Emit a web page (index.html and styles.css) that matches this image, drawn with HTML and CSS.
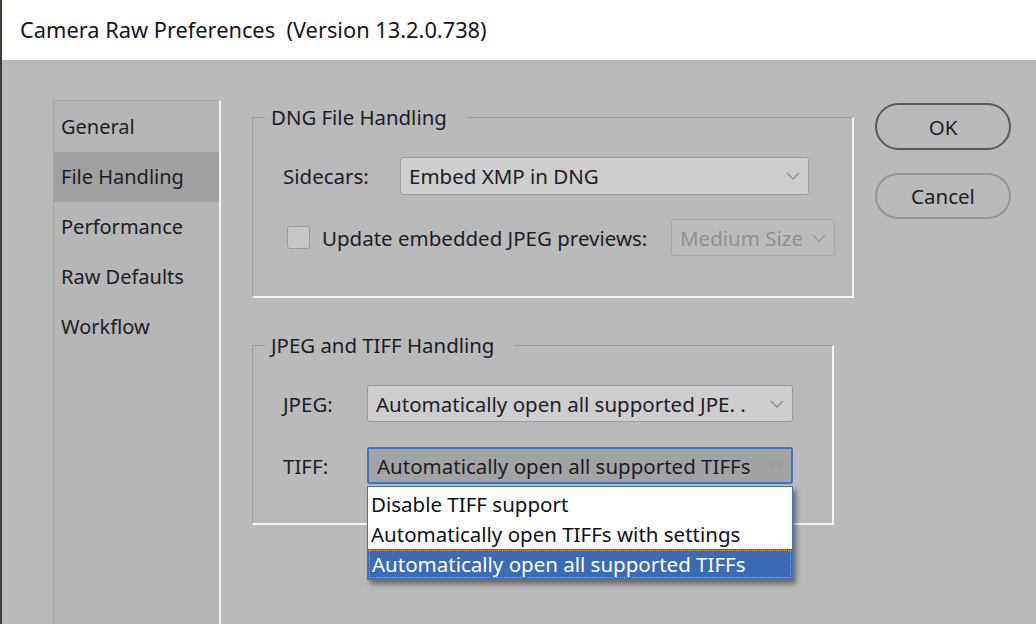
FILE: index.html
```html
<!DOCTYPE html>
<html>
<head>
<meta charset="utf-8">
<link rel="stylesheet" href="styles.css">
</head>
<body>
<div class="window">
  <div class="titlebar">Camera Raw Preferences&nbsp; (Version 13.2.0.738)</div>
  <div class="main">
    <nav class="sidebar">
      <div class="nav-item">General</div>
      <div class="nav-item selected">File Handling</div>
      <div class="nav-item">Performance</div>
      <div class="nav-item">Raw Defaults</div>
      <div class="nav-item">Workflow</div>
    </nav>
    <div class="content">
      <div class="groups">
        <fieldset class="group group-dng">
          <legend>DNG File Handling</legend>
          <div class="row">
            <span class="label label-side">Sidecars:</span>
            <div class="select sel-sidecars"><span>Embed XMP in DNG</span>
              <svg class="chev" width="14" height="8" viewBox="0 0 14 8"><polyline points="1,1 7,7 13,1" fill="none" stroke="#8c8c8c" stroke-width="1.3"/></svg>
            </div>
          </div>
          <div class="row row-check">
            <span class="checkbox"></span>
            <span class="label label-check">Update embedded JPEG previews:</span>
            <div class="select sel-disabled"><span>Medium Size</span>
              <svg class="chev" width="14" height="8" viewBox="0 0 14 8"><polyline points="1,1 7,7 13,1" fill="none" stroke="#9a9a9a" stroke-width="1.3"/></svg>
            </div>
          </div>
        </fieldset>
        <fieldset class="group group-jpeg">
          <legend>JPEG and TIFF Handling</legend>
          <div class="row">
            <span class="label label-jt">JPEG:</span>
            <div class="select sel-jt"><span>Automatically open all supported JPE. .</span>
              <svg class="chev" width="14" height="8" viewBox="0 0 14 8"><polyline points="1,1 7,7 13,1" fill="none" stroke="#8c8c8c" stroke-width="1.3"/></svg>
            </div>
          </div>
          <div class="row row-tiff">
            <span class="label label-jt">TIFF:</span>
            <div class="tiff-wrap">
              <div class="select sel-jt sel-focus"><span>Automatically open all supported TIFFs</span>
                <svg class="chev" width="14" height="8" viewBox="0 0 14 8"><polyline points="1,1 7,7 13,1" fill="none" stroke="#9a9a9a" stroke-width="1.3"/></svg>
              </div>
              <ul class="dropdown">
                <li>Disable TIFF support</li>
                <li>Automatically open TIFFs with settings</li>
                <li class="active">Automatically open all supported TIFFs</li>
              </ul>
            </div>
          </div>
        </fieldset>
      </div>
      <div class="buttons">
        <div class="btn btn-ok">OK</div>
        <div class="btn btn-cancel">Cancel</div>
      </div>
    </div>
  </div>
</div>
</body>
</html>
```
FILE: styles.css
```css
* { box-sizing: border-box; }
html, body { margin: 0; padding: 0; }
body {
  width: 1036px;
  height: 624px;
  overflow: hidden;
  font-family: "Noto Sans", "Open Sans", sans-serif;
  color: #1c1c28;
  background: #bababa;
}
.window {
  height: 624px;
  border-left: 2px solid #3e3f33;
  display: flex;
  flex-direction: column;
}
.titlebar {
  height: 60px;
  background: #ffffff;
  font-size: 21.8px;
  padding: 15px 0 0 18px;
  line-height: 30px;
  color: #15151d;
  flex: none;
}
.main {
  flex: 1;
  background: #bababa;
  display: flex;
  padding: 40px 0 0 51px;
}
.sidebar {
  width: 168px;
  background: #b6b6b6;
  border-top: 1px solid #a6a6a6;
  border-left: 1px solid #a4a4a4;
  border-right: 2px solid #f6f6f6;
  padding-top: 1px;
  flex: none;
}
.nav-item {
  height: 50px;
  line-height: 50px;
  padding-left: 7px;
  font-size: 20px;
}
.nav-item.selected { background: #a1a1a1; }
.content {
  display: flex;
  padding: 4px 0 0 31px;
  gap: 21px;
  align-items: flex-start;
}
.groups {
  display: flex;
  flex-direction: column;
  gap: 34px;
}
.group {
  margin: 0;
  border-top: 1px solid #9c9c9c;
  border-left: 1px solid #9c9c9c;
  border-right: 2px solid #f6f6f6;
  border-bottom: 2px solid #f6f6f6;
  padding: 0 0 0 12px;
  min-width: 0;
}
.group legend {
  font-size: 20.4px;
  line-height: 26px;
  padding: 0 20px 0 6px;
}
.group-dng { width: 602px; padding-bottom: 40px; }
.group-jpeg { width: 582px; padding-bottom: 39px; }
.row {
  display: flex;
  align-items: center;
  margin-top: 27px;
  padding-left: 18px;
  font-size: 20.5px;
}
.row-check { margin-top: 24px; }
.row-tiff { margin-top: 25px; }
.label-side { width: 117px; }
.label-jt { width: 84px; }
.checkbox {
  width: 23px;
  height: 23px;
  margin-left: 4px;
  border: 1px solid #9a9a9a;
  border-radius: 3px;
  background: #c7c7c7;
  flex: none;
}
.label-check { margin-left: 12px; width: 349px; white-space: nowrap; }
.select {
  height: 38px;
  border: 1px solid #9b9b9b;
  border-radius: 3px;
  background: #cecece;
  display: flex;
  align-items: center;
  justify-content: space-between;
  padding: 0 8px 0 8px;
  font-size: 20.5px;
  white-space: nowrap;
}
.chev { flex: none; }
.sel-sidecars { width: 409px; }
.sel-disabled {
  width: 164px;
  height: 37px;
  background: #bcbcbc;
  border-color: #a9a9a9;
  color: #8f8f8f;
}
.sel-jt { width: 426px; height: 37px; }
.sel-focus {
  background: #a3a3a3;
  border: 2px solid #3f74c9;
  padding-left: 8px;
}
.tiff-wrap { position: relative; }
.dropdown {
  position: absolute;
  left: 0;
  top: 39px;
  width: 426px;
  margin: 0;
  padding: 2px 0 0 0;
  list-style: none;
  background: #ffffff;
  border: 1px solid #3f74c9;
  box-shadow: 3px 4px 5px rgba(0,0,0,0.45);
  font-size: 20.5px;
  z-index: 2;
}
.dropdown li {
  height: 30px;
  line-height: 31px;
  padding-left: 3px;
  color: #101018;
  white-space: nowrap;
}
.dropdown li.active {
  background: #3c6bb6;
  color: #ffffff;
  outline: 1px dotted #e39a3a;
  outline-offset: -2px;
  padding-left: 4px;
}
.buttons {
  display: flex;
  flex-direction: column;
  gap: 23px;
  margin-top: -1px;
}
.btn {
  width: 136px;
  height: 47px;
  border-radius: 24px;
  display: flex;
  align-items: center;
  justify-content: center;
  font-size: 20.5px;
  background: #bababa;
}
.btn-ok { border: 2px solid #595959; }
.btn-cancel { border: 2px solid #969696; height: 46px; }
```
